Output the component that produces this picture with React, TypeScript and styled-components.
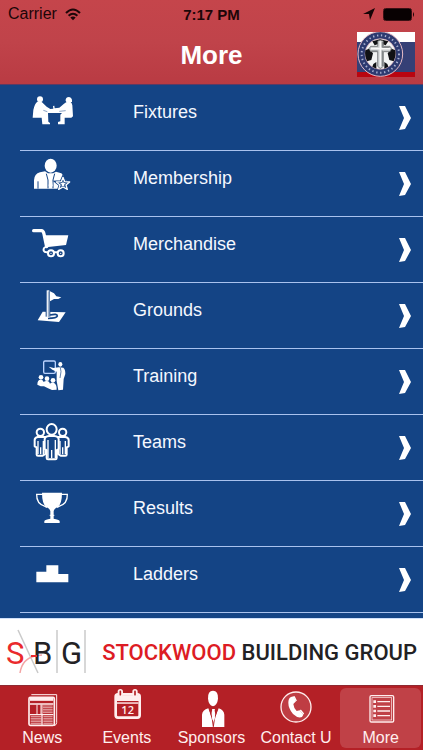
import React from "react";
import styled, { createGlobalStyle } from "styled-components";

const GlobalStyle = createGlobalStyle`
  *, *::before, *::after { box-sizing: border-box; }
  html, body, #root { height: 100%; }
  body {
    margin: 0;
    background: #144485;
    font-family: "Liberation Sans", Arial, sans-serif;
  }
`;

const Screen = styled.div`
  display: flex;
  flex-direction: column;
  height: 100%;
  overflow: hidden;
`;

const Header = styled.header`
  flex: none;
  background: linear-gradient(#c5454b, #c0434a 50%, #b93b43);
  border-bottom: 1px solid #5c3a63;
`;

const StatusBar = styled.div`
  display: grid;
  grid-template-columns: 1fr auto 1fr;
  align-items: center;
  height: 28px;
  padding: 0 8px;
  color: #1c0608;
  font-size: 16px;
`;

const StatusGroup = styled.div<{ $end?: boolean }>`
  display: flex;
  align-items: center;
  justify-content: ${(p) => (p.$end ? "flex-end" : "flex-start")};
  gap: 8px;
`;

const Clock = styled.time`
  font-size: 15px;
  font-weight: 700;
`;

const TitleBar = styled.div`
  display: grid;
  grid-template-columns: 1fr auto 1fr;
  align-items: center;
  height: 56px;
  padding: 0 8px 3px;
`;

const Title = styled.h1`
  grid-column: 2;
  margin: 0;
  color: #fff;
  font-size: 26px;
  line-height: 32px;
`;

const Crest = styled.svg`
  justify-self: end;
  display: block;
`;

const List = styled.ul`
  flex: 1;
  min-height: 0;
  overflow: hidden;
  margin: 0;
  padding: 0;
  list-style: none;
`;

const Item = styled.li`
  margin-left: 20px;
  border-bottom: 1px solid #a9c2ee;
`;

const RowButton = styled.button`
  display: grid;
  grid-template-columns: 105px 1fr auto;
  align-items: start;
  width: 100%;
  height: 65px;
  padding: 6px 12px 0 8px;
  border: 0;
  background: none;
  color: #f4f8ff;
  font: inherit;
  font-size: 18px;
  line-height: 22px;
  text-align: left;
  cursor: pointer;
`;

const RowIcon = styled.svg`
  width: 48px;
  height: 42px;
`;

const RowLabel = styled.span`
  padding-top: 10px;
`;

const Chevron = styled.svg`
  width: 12px;
  height: 24px;
  margin-top: 15px;
`;

const Banner = styled.a`
  flex: none;
  display: flex;
  align-items: center;
  justify-content: space-between;
  height: 67px;
  padding: 0 6px;
  border-top: 1px solid #cfe0fa;
  background: #fff;
  text-decoration: none;
`;

const BannerMark = styled.svg`
  flex: none;
`;

const BannerText = styled.span`
  color: #222124;
  font-family: Roboto, sans-serif;
  font-size: 22px;
  font-weight: 500;
  white-space: nowrap;
`;

const Red = styled.span`
  color: #dd1c24;
`;

const TabBar = styled.nav`
  flex: none;
  display: grid;
  grid-template-columns: repeat(5, 1fr);
  height: 65px;
  border-top: 1px solid #8f2a32;
  background: #b42026;
`;

const Tab = styled.button<{ $active?: boolean }>`
  display: flex;
  flex-direction: column;
  align-items: center;
  min-width: 0;
  margin: 2px;
  padding: 0;
  border: 0;
  border-radius: 6px;
  background: ${(p) => (p.$active ? "#c04147" : "transparent")};
  color: #ffeeee;
  font: inherit;
  font-size: 16px;
  line-height: 20px;
  white-space: nowrap;
  cursor: pointer;
`;

const TabIcon = styled.svg`
  flex: none;
  width: 40px;
  height: 40px;
`;

const FixturesIcon = () => (
  <RowIcon viewBox="24 15 144 126" fill="#fff" aria-hidden="true">
    <circle cx="60" cy="40" r="9" />
    <path d="M52 47Q60 44 66 49L80 62L91 69L100 68L99 60L103 59L104 67L118 65L132 53Q138 46 150 47Q156 49 157 58L159 91L154 95H134V115H114V108L121 106V86L126 81H84L85 107L90 111V115H67L65 95H38L40 72Q44 53 52 47Z" />
    <path d="M137 44Q136 34 147 33Q157 35 156 46L152 50H140Z" />
    <path d="M82 77L70 73M118 76L137 74" stroke="#144485" strokeWidth="1.5" />
  </RowIcon>
);

const MembershipIcon = () => (
  <RowIcon viewBox="24 213 144 126" fill="#fff" aria-hidden="true">
    <ellipse cx="92" cy="239" rx="18" ry="21" />
    <path d="M42 308V283Q43 263 60 259L75 256L84 262H99L108 257L124 262Q132 267 133 279L141 285L123 308Z" />
    <path d="M79 263L84 282L84 307M104 263L99 282V307M54 308V286" stroke="#144485" strokeWidth="3" fill="none" />
    <path d="M86 264H98L94 270L98 300L92 306L86 300L90 270Z" />
    <path d="M129 272L135 286L151 287L139 297L143 311L129 304L115 311L119 297L107 287L123 286Z" stroke="#144485" strokeWidth="7" />
    <path d="M129 274L134 287L149 288L138 297L142 310L129 303L116 310L120 297L109 288L124 287Z" fill="#144485" stroke="#fff" strokeWidth="4" strokeLinejoin="round" />
    <path d="M129 285L131 291L138 292L132 296L134 302L129 299L124 302L126 296L120 292L127 291Z" />
  </RowIcon>
);

const CartIcon = () => (
  <RowIcon viewBox="24 15 144 126" fill="none" stroke="#fff" aria-hidden="true">
    <path d="M41 38H65Q70 39 72 48L80 86" strokeWidth="10" strokeLinecap="round" />
    <path d="M74 52H145L138 81L78 88Z" fill="#fff" stroke="none" />
    <path d="M80 86Q69 88 71 98Q73 103 80 103H116" strokeWidth="6" />
    <circle cx="93" cy="106" r="9" strokeWidth="6" fill="#144485" />
    <circle cx="122" cy="106" r="9" strokeWidth="6" fill="#144485" />
    <circle cx="93" cy="106" r="2" fill="#fff" stroke="none" />
    <circle cx="122" cy="106" r="2" fill="#fff" stroke="none" />
  </RowIcon>
);

const GroundsIcon = () => (
  <RowIcon viewBox="24 213 144 126" fill="#fff" aria-hidden="true">
    <path d="M68 281L137 283L117 312L53 307Z" />
    <path d="M90 291Q112 286 112 294Q110 301 84 301" fill="none" stroke="#144485" strokeWidth="5" />
    <path d="M77 217H91V296H77Z" fill="#144485" />
    <path d="M80 217H88V299H80Z" />
    <path d="M85 220V298" stroke="#144485" strokeWidth="1.5" />
    <path d="M90 220L102 226L109 235L124 238L115 243H102L90 250Z" />
  </RowIcon>
);

const TrainingIcon = () => (
  <RowIcon viewBox="24 15 144 126" fill="#fff" aria-hidden="true">
    <rect x="71" y="33" width="35" height="37" rx="4" fill="none" stroke="#bcd4ff" strokeWidth="4" />
    <ellipse cx="121" cy="43" rx="6" ry="7" />
    <path d="M86 50L101 54L116 52L130 53Q136 57 136 72L131 87L129 119L115 121L110 93V65L97 59Z" />
    <circle cx="63" cy="82" r="7" />
    <circle cx="81" cy="86" r="7" />
    <circle cx="99" cy="91" r="7" />
    <path d="M52 104Q52 89 62 89Q69 89 71 96Q75 92 82 93Q88 94 90 101Q95 96 101 98Q111 102 110 119L96 120L84 115L72 109L62 109Z" />
    <path d="M121 53L123 65L120 84" stroke="#144485" strokeWidth="2" fill="none" />
  </RowIcon>
);

const TeamsIcon = () => (
  <RowIcon viewBox="24 213 144 126" fill="#144485" stroke="#fff" strokeWidth="6" strokeLinejoin="round" aria-hidden="true">
    <circle cx="61" cy="247" r="11" />
    <path d="M53 261Q44 263 44 270V289L50 292V314Q50 317 54 317H68L76 312V261Z" />
    <path d="M54 273V312M62 292V313M70 273V312" strokeWidth="4" />
    <circle cx="128" cy="247" r="11" />
    <path d="M136 261Q146 263 146 270V289L140 292V314Q140 317 136 317H122L114 312V261Z" />
    <path d="M136 273V312M128 292V313M120 273V312" strokeWidth="4" />
    <path d="M87 258Q74 259 74 268V296L80 301V324Q80 328 84 328H106Q110 328 110 324V301L116 296V268Q116 259 103 258Z" />
    <ellipse cx="95" cy="238" rx="15" ry="16" />
    <path d="M84 270V324M95 300V325M106 270V324" strokeWidth="4" />
  </RowIcon>
);

const ResultsIcon = () => (
  <RowIcon viewBox="24 21 144 126" fill="#fff" aria-hidden="true">
    <path d="M66 38H126Q126 72 113 81Q104 85 101 93V116Q116 118 119 123V129H73V123Q76 118 91 116V93Q88 85 79 81Q66 72 66 38Z" />
    <path d="M69 43H50Q49 72 75 79L81 82M123 43H142Q143 72 117 79L111 82" fill="none" stroke="#fff" strokeWidth="4" />
    <path d="M89 106H103" stroke="#fff" strokeWidth="3" />
  </RowIcon>
);

const LaddersIcon = () => (
  <RowIcon viewBox="24 219 144 126" fill="#fff" aria-hidden="true">
    <path d="M79 256H115V282H145V307H49V275H79Z" />
  </RowIcon>
);

const rows: { label: string; Icon: React.FC }[] = [
  { label: "Fixtures", Icon: FixturesIcon },
  { label: "Membership", Icon: MembershipIcon },
  { label: "Merchandise", Icon: CartIcon },
  { label: "Grounds", Icon: GroundsIcon },
  { label: "Training", Icon: TrainingIcon },
  { label: "Teams", Icon: TeamsIcon },
  { label: "Results", Icon: ResultsIcon },
  { label: "Ladders", Icon: LaddersIcon },
];

const NewsIcon = () => (
  <TabIcon viewBox="0 0 120 120" fill="none" stroke="#ffeeee" aria-hidden="true">
    <path d="M28 20H104V104Q104 111 96 113" strokeWidth="3" />
    <rect x="21" y="28" width="76" height="84" rx="4" strokeWidth="5" />
    <path d="M24 34H94" strokeWidth="9" />
    <path d="M24 48H94M24 80H94M60 80V110" strokeWidth="4" />
    <path d="M45 50V80M57 50V80M60 50V80" strokeWidth="3" />
    <path d="M63 54H92M63 59H92M63 64H92M63 69H92M63 74H92M26 86H58M26 91H58M26 96H58M26 101H58M26 106H58M64 86H92M64 91H92M64 96H92M64 101H92M64 106H92" strokeWidth="2" />
  </TabIcon>
);

const EventsIcon = () => (
  <TabIcon viewBox="0 0 120 120" aria-hidden="true">
    <rect x="26" y="19" width="72" height="70" rx="7" fill="none" stroke="#ffeeee" strokeWidth="8" />
    <path d="M26 22H98V40H26ZM30 42H94V47H30Z" fill="#ffeeee" />
    <path d="M30 41H94" stroke="#b42026" strokeWidth="4" />
    <rect x="32" y="3" width="16" height="22" rx="8" fill="#ffeeee" />
    <rect x="76" y="3" width="16" height="22" rx="8" fill="#ffeeee" />
    <path d="M40 10V20M84 10V20" stroke="#b42026" strokeWidth="5" strokeLinecap="round" />
    <text x="62" y="79" textAnchor="middle" fill="#ffeeee" fontFamily="Open Sans, sans-serif" fontWeight="600" fontSize="33">12</text>
  </TabIcon>
);

const SponsorsIcon = () => (
  <TabIcon viewBox="-6 0 120 120" fill="#fff" aria-hidden="true">
    <path d="M45 32Q44 8 60 8Q76 8 75 32Q73 51 60 55Q47 51 45 32Z" />
    <path d="M27 117V80Q28 66 46 61L54 83L58 64H64L68 83L77 61Q93 66 94 80V117Z" />
    <path d="M49 60L58 94L61 116L64 94L74 60" fill="none" stroke="#b42026" strokeWidth="3" />
    <path d="M57 63H66L63 69L66 90L61 101L57 90L60 69Z" />
  </TabIcon>
);

const ContactIcon = () => (
  <TabIcon viewBox="0 0 120 120" fill="none" aria-hidden="true">
    <circle cx="60" cy="57" r="45" fill="#bf3d43" stroke="#ffeeee" strokeWidth="4" />
    <path d="M45 27L53 25L60 40L52 48Q53 60 62 69L71 67L82 80L78 87Q66 92 51 78Q37 61 37 44Q37 31 45 27Z" fill="#fff" />
    <path d="M54 25L61 39M73 66L83 78" stroke="#fff" strokeWidth="4" />
  </TabIcon>
);

const MoreIcon = () => (
  <TabIcon viewBox="0 0 120 120" fill="none" stroke="#ffeeee" aria-hidden="true">
    <rect x="27" y="23" width="71" height="79" rx="4" strokeWidth="4" />
    <rect x="33" y="29" width="59" height="67" strokeWidth="2" />
    <path d="M49 41H87M49 55H87M49 69H87M49 83H87" strokeWidth="4" />
    <path d="M37 41H45M37 55H45M37 69H45M37 83H45" strokeWidth="8" />
  </TabIcon>
);

const tabs: { label: string; Icon: React.FC }[] = [
  { label: "News", Icon: NewsIcon },
  { label: "Events", Icon: EventsIcon },
  { label: "Sponsors", Icon: SponsorsIcon },
  { label: "Contact U", Icon: ContactIcon },
  { label: "More", Icon: MoreIcon },
];

const WifiIcon = () => (
  <svg width="16" height="13" viewBox="0 0 16 13" fill="none" stroke="#1c0608" strokeWidth="2" aria-hidden="true">
    <path d="M1 5Q8 -2 15 5M3.6 7.8Q8 3.6 12.4 7.8" />
    <path d="M5.3 9.6Q8 7.2 10.7 9.6L8 12.3Z" fill="#1c0608" stroke="none" />
  </svg>
);

const LocationIcon = () => (
  <svg width="12" height="12" viewBox="0 0 12 12" fill="#150406" aria-hidden="true">
    <path d="M12 0L7 12L6 6L0 6Z" />
  </svg>
);

const BatteryIcon = () => (
  <svg width="32" height="13" viewBox="0 0 32 13" aria-hidden="true">
    <rect x="0.5" y="0.5" width="28" height="12" rx="2" fill="none" stroke="#3a1014" />
    <rect x="1" y="1" width="27" height="11" rx="1" fill="#080102" />
    <path d="M30 4Q32 6.5 30 9Z" fill="#150406" />
  </svg>
);

const ClubCrest = () => (
  <Crest width="58" height="45" viewBox="0 0 174 135" role="img" aria-label="Club crest">
    <path d="M0 0H174V30H0Z" fill="#fff" />
    <path d="M0 30H174V120H0Z" fill="#354076" />
    <path d="M0 120H174V135H0Z" fill="#b90510" />
    <circle cx="70" cy="66" r="67" fill="#2d3a70" stroke="#e6bcc6" strokeWidth="3" />
    <circle cx="70" cy="66" r="56" fill="none" stroke="#a9b1d2" strokeWidth="6" strokeDasharray="4 8" />
    <circle cx="70" cy="66" r="46" fill="#f2f3f3" stroke="#d9a9b5" strokeWidth="2" />
    <path d="M46 28L69 22L94 28L86 40L70 34L53 40ZM25 55L36 50L48 64L43 84L30 88Q22 70 25 55ZM115 55L104 50L92 64L97 84L110 88Q118 70 115 55ZM49 96L58 90V110L46 104ZM91 96L82 90V110L94 104Z" fill="#101114" />
    <path d="M62 27L70 24L79 27V43H99L104 50L99 59H79V103L70 110L62 103V59H41L36 50L41 43H62Z" fill="#c8cbcc" stroke="#55585b" strokeWidth="2" />
    <path d="M70 28V104M42 50H99" stroke="#f8f8f8" strokeWidth="5" />
    <path d="M76 30V46H98M76 56V102M43 57H62" fill="none" stroke="#777b7e" strokeWidth="3" />
  </Crest>
);

const SbgMark = () => (
  <BannerMark width="82" height="46" viewBox="0 0 82 46" fontFamily="Roboto, sans-serif" fontSize="31" aria-hidden="true">
    <path d="M12 1L32 44M51 1V44M79 1V44" stroke="#cacaca" strokeWidth="1.5" />
    <path d="M14 44Q16 30 29 27L36 26" fill="none" stroke="#f3a5a5" strokeWidth="1.5" />
    <text x="0" y="35" fill="#ea2a2d">S</text>
    <text x="27" y="35" fill="#232225">B</text>
    <text x="55" y="35" fill="#232225">G</text>
    <path d="M25 27H31" stroke="#ea2a2d" strokeWidth="2" />
  </BannerMark>
);

export default function App() {
  return (
    <>
      <GlobalStyle />
      <Screen>
        <Header>
          <StatusBar>
            <StatusGroup>
              Carrier
              <WifiIcon />
            </StatusGroup>
            <Clock>7:17 PM</Clock>
            <StatusGroup $end>
              <LocationIcon />
              <BatteryIcon />
            </StatusGroup>
          </StatusBar>
          <TitleBar>
            <Title>More</Title>
            <ClubCrest />
          </TitleBar>
        </Header>
        <List>
          {rows.map(({ label, Icon }) => (
            <Item key={label}>
              <RowButton type="button">
                <Icon />
                <RowLabel>{label}</RowLabel>
                <Chevron viewBox="0 0 12 24" fill="#fff" aria-hidden="true">
                  <path d="M0 0H6L12 12L6 23L0 24L5 12Z" />
                </Chevron>
              </RowButton>
            </Item>
          ))}
        </List>
        <Banner href="#stockwood">
          <SbgMark />
          <BannerText>
            <Red>STOCKWOOD</Red> BUILDING GROUP
          </BannerText>
        </Banner>
        <TabBar>
          {tabs.map(({ label, Icon }) => (
            <Tab key={label} type="button" $active={label === "More"}>
              <Icon />
              {label}
            </Tab>
          ))}
        </TabBar>
      </Screen>
    </>
  );
}
